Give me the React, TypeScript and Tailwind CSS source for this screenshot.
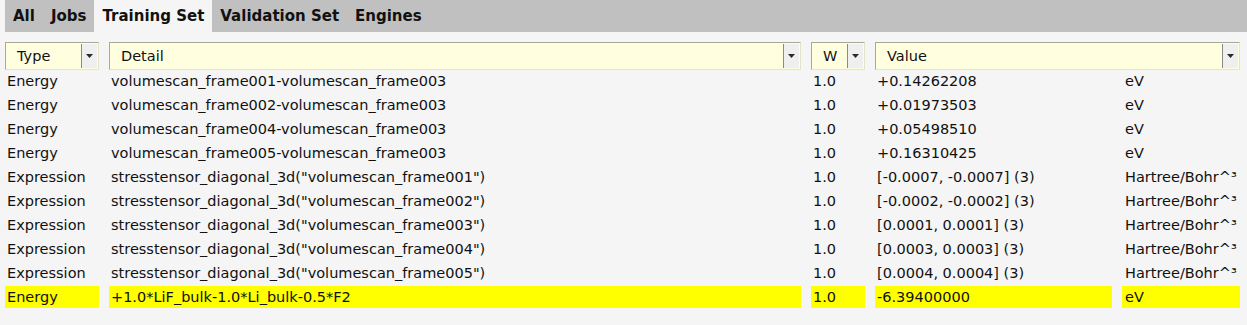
import React from "react";

const rows: { type: string; detail: string; w: string; value: string; unit: string; hl?: boolean }[] = [
  { type: "Energy", detail: "volumescan_frame001-volumescan_frame003", w: "1.0", value: "+0.14262208", unit: "eV" },
  { type: "Energy", detail: "volumescan_frame002-volumescan_frame003", w: "1.0", value: "+0.01973503", unit: "eV" },
  { type: "Energy", detail: "volumescan_frame004-volumescan_frame003", w: "1.0", value: "+0.05498510", unit: "eV" },
  { type: "Energy", detail: "volumescan_frame005-volumescan_frame003", w: "1.0", value: "+0.16310425", unit: "eV" },
  { type: "Expression", detail: 'stresstensor_diagonal_3d("volumescan_frame001")', w: "1.0", value: "[-0.0007, -0.0007] (3)", unit: "Hartree/Bohr^³" },
  { type: "Expression", detail: 'stresstensor_diagonal_3d("volumescan_frame002")', w: "1.0", value: "[-0.0002, -0.0002] (3)", unit: "Hartree/Bohr^³" },
  { type: "Expression", detail: 'stresstensor_diagonal_3d("volumescan_frame003")', w: "1.0", value: "[0.0001, 0.0001] (3)", unit: "Hartree/Bohr^³" },
  { type: "Expression", detail: 'stresstensor_diagonal_3d("volumescan_frame004")', w: "1.0", value: "[0.0003, 0.0003] (3)", unit: "Hartree/Bohr^³" },
  { type: "Expression", detail: 'stresstensor_diagonal_3d("volumescan_frame005")', w: "1.0", value: "[0.0004, 0.0004] (3)", unit: "Hartree/Bohr^³" },
  { type: "Energy", detail: "+1.0*LiF_bulk-1.0*Li_bulk-0.5*F2", w: "1.0", value: "-6.39400000", unit: "eV", hl: true },
];

function Drop() {
  return (
    <div className="flex h-full w-[16px] items-center justify-center border-l border-[#8a8a8a] bg-[#efefef]">
      <svg width="7" height="4" viewBox="0 0 7 4">
        <path d="M0 0 L7 0 L3.5 4 Z" fill="#2a2a2a" />
      </svg>
    </div>
  );
}

function Header({ label, w }: { label: string; w: string }) {
  return (
    <div
      className={`flex h-[28px] items-stretch border-t border-l border-t-[#a9a99a] border-l-[#a9a99a] border-b border-r border-b-[#e4e4c8] border-r-[#e4e4c8] bg-[#ffffe0] ${w}`}
    >
      <div className="flex flex-1 items-center pl-[11px] pt-[2px] text-[14.5px] text-[#111]">{label}</div>
      <div className="flex items-stretch py-[1px] pr-[1px]">
        <Drop />
      </div>
    </div>
  );
}

export default function App() {
  const tabs = ["All", "Jobs", "Training Set", "Validation Set", "Engines"];
  return (
    <div
      className="h-[325px] w-[1247px] overflow-hidden bg-[#f5f5f5] text-[#111]"
      style={{ fontFamily: '"DejaVu Sans", sans-serif' }}
    >
      <div className="ml-[5px] flex h-[32px] bg-[#c0c0c0]">
        {tabs.map((t) => (
          <div
            key={t}
            className={`flex items-center px-[8px] text-[15px] font-bold ${t === "Training Set" ? "bg-[#f5f5f5]" : ""}`}
          >
            {t}
          </div>
        ))}
      </div>
      <div className="ml-[5px] mt-[10px] flex gap-[10px]">
        <Header label="Type" w="w-[94px]" />
        <Header label="Detail" w="w-[692px]" />
        <Header label="W" w="w-[54px]" />
        <Header label="Value" w="w-[365px]" />
      </div>
      <div className="ml-[5px] grid grid-cols-[94px_692px_54px_237px_118px] gap-x-[10px] gap-y-[2px] text-[14.5px]">
        {rows.map((r, i) => {
          const c = `flex h-[22px] items-center pl-[2px] pt-[1px] whitespace-nowrap overflow-hidden ${r.hl ? "bg-[#ffff00]" : ""}`;
          return (
            <React.Fragment key={i}>
              <div className={c}>{r.type}</div>
              <div className={c}>{r.detail}</div>
              <div className={c}>{r.w}</div>
              <div className={c}>{r.value}</div>
              <div className={`${c} pl-[3px]`}>{r.unit}</div>
            </React.Fragment>
          );
        })}
      </div>
    </div>
  );
}
